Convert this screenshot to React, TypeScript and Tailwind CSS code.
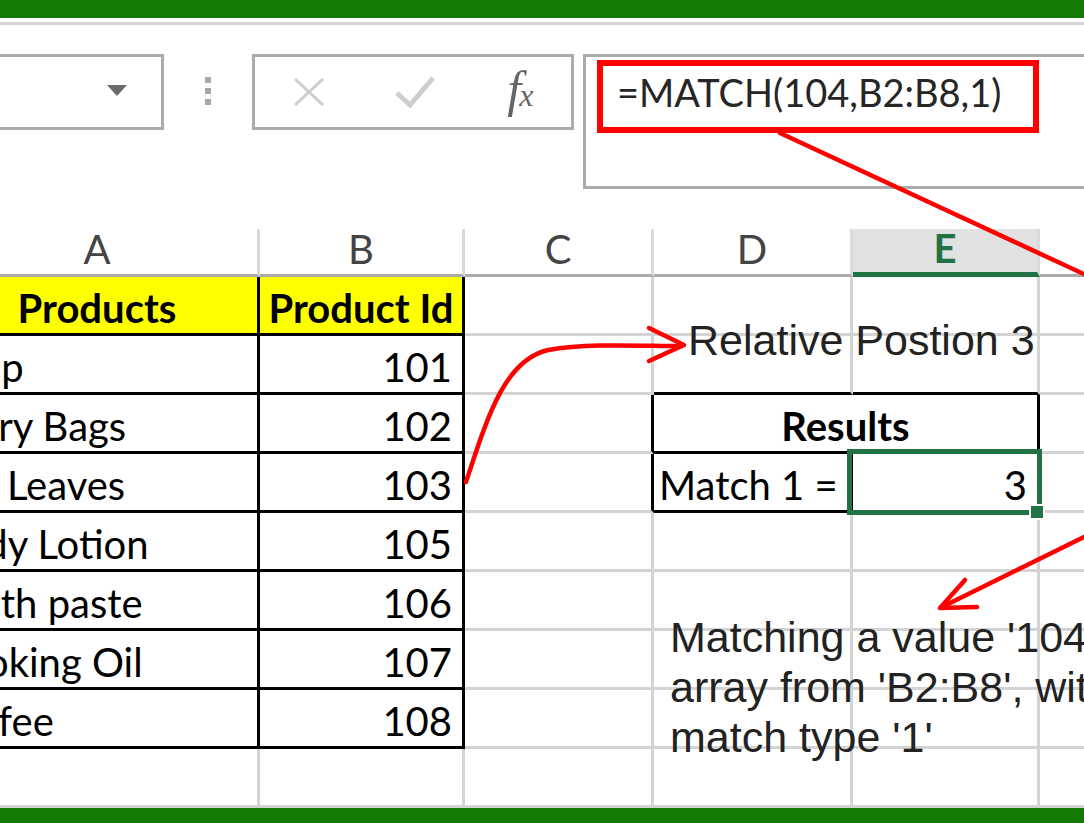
import React from 'react';

type Cell = {
  text?: string;
  align?: 'left' | 'center' | 'right';
  bold?: boolean;
  yellow?: boolean;
  right?: 'black' | 'grid';
  bottom?: 'black' | 'grid';
  span?: 2;
  shift?: boolean;
};

const rightBorder = { black: 'border-r-black', grid: 'border-r-[#d4d4d4]' };
const bottomBorder = { black: 'border-b-black', grid: 'border-b-[#d4d4d4]' };
const alignClass = {
  left: 'justify-start pl-[5px]',
  center: 'justify-center',
  right: 'justify-end pr-[10px]',
};

const products = [
  ['Soap', '101'],
  ['Carry Bags', '102'],
  ['Tea Leaves', '103'],
  ['Body Lotion', '105'],
  ['Tooth paste', '106'],
  ['Cooking Oil', '107'],
  ['Coffee', '108'],
];

// columns C..F for each product row
const sideCells = (i: number): Cell[] => {
  if (i === 0) return [{}, { bottom: 'black' }, { bottom: 'black' }, {}];
  if (i === 1)
    return [
      { right: 'black' },
      { text: 'Results', align: 'center', bold: true, span: 2, right: 'black', bottom: 'black' },
      {},
    ];
  if (i === 2)
    return [
      { right: 'black' },
      { text: 'Match 1 =', align: 'left', right: 'black', bottom: 'black' },
      { text: '3', align: 'right', right: 'black', bottom: 'black' },
      {},
    ];
  return [{}, {}, {}, {}];
};

const rows: Cell[][] = [
  [
    { text: 'Products', align: 'center', bold: true, yellow: true, right: 'black', bottom: 'black' },
    { text: 'Product Id', align: 'center', bold: true, yellow: true, right: 'black', bottom: 'black' },
    {},
    {},
    {},
    {},
  ],
  ...products.map(([name, id], i) => [
    { text: name, align: 'left', right: 'black', bottom: 'black', shift: true } as Cell,
    { text: id, align: 'right', right: 'black', bottom: 'black' } as Cell,
    ...sideCells(i),
  ]),
  [{}, {}, {}, {}, {}, {}],
];

const columns = ['A', 'B', 'C', 'D', 'E', 'F'];

function SheetCell({ cell }: { cell: Cell }) {
  return (
    <div
      className={`flex h-[59px] items-center whitespace-nowrap overflow-hidden border-r-[3px] border-b-[3px] pt-[5px] text-[40px] text-black ${
        rightBorder[cell.right ?? 'grid']
      } ${bottomBorder[cell.bottom ?? 'grid']} ${alignClass[cell.align ?? 'left']} ${
        cell.bold ? 'font-bold' : ''
      } ${cell.yellow ? 'bg-[#ffff00]' : ''} ${cell.span === 2 ? 'col-span-2' : ''}`}
    >
      <span className={cell.shift ? '-ml-[5px]' : ''}>{cell.text}</span>
    </div>
  );
}

export default function App() {
  return (
    <div className="relative h-[823px] w-[1084px] overflow-hidden bg-white font-['Lato',sans-serif]">
      <div className="h-[18px] bg-[#127c02]" />
      <div className="h-[4px]" />
      <div className="h-[3px] bg-[#d4d4d4]" />
      <div className="h-[29px]" />

      {/* formula bar */}
      <div className="flex h-[135px] items-start">
        <div className="-ml-[36px] flex h-[76px] w-[200px] shrink-0 items-center justify-end border-[3px] border-[#ababab] pr-[34px] pb-[4px]">
          <svg width="20" height="11" viewBox="0 0 20 11">
            <path d="M0 0 H20 L10 11 Z" fill="#6b6b6b" />
          </svg>
        </div>
        <div className="flex h-[76px] w-[88px] shrink-0 flex-col items-center justify-center gap-[5px] pb-[2px]">
          <div className="h-[6px] w-[6px] bg-[#a8a8a8]" />
          <div className="h-[6px] w-[6px] bg-[#a8a8a8]" />
          <div className="h-[6px] w-[6px] bg-[#a8a8a8]" />
        </div>
        <div className="grid h-[76px] w-[322px] shrink-0 grid-cols-3 items-center justify-items-center border-[3px] border-[#ababab]">
          <svg width="32" height="30" viewBox="0 0 32 30" className="ml-[2px]">
            <path d="M2 2 L30 28 M30 2 L2 28" stroke="#cdcdcd" strokeWidth="3" />
          </svg>
          <svg width="40" height="34" viewBox="0 0 40 34" className="ml-[4px]">
            <path d="M2 18 L15 30 L38 3" stroke="#cdcdcd" strokeWidth="5" fill="none" />
          </svg>
          <span className="ml-[4px] mb-[6px] font-['Liberation_Serif',serif] italic leading-none text-[#666666]">
            <span className="text-[50px]">f</span>
            <span className="-ml-[2px] text-[32px]">x</span>
          </span>
        </div>
        <div className="ml-[9px] h-[135px] w-[560px] shrink-0 border-[3px] border-[#ababab] pl-[11px] pt-[3px]">
          <div className="flex h-[73px] w-[442px] items-center border-[6px] border-[#ff0000] pl-[14px] pb-[8px] text-[38px] text-[#262626]">
            =MATCH(104,B2:B8,1)
          </div>
        </div>
      </div>

      <div className="h-[40px]" />

      {/* sheet */}
      <div className="-ml-[63px] grid w-[1223px] grid-cols-[323px_205px_189px_199px_187px_120px]">
        {columns.map((c) => (
          <div
            key={c}
            className={`flex h-[48px] items-center justify-center border-r-[3px] border-r-[#dadada] pb-[5px] text-[40px] ${
              c === 'E'
                ? 'border-b-[5px] border-b-[#217346] bg-[#e1e1e1] font-bold text-[#217346]'
                : 'border-b-[3px] border-b-[#ababab] text-[#444444]'
            }`}
          >
            {c}
          </div>
        ))}
        {rows.map((row, r) => row.map((cell, c) => <SheetCell key={`${r}-${c}`} cell={cell} />))}
      </div>

      <div className="h-[15px] bg-[#127c02]" />

      {/* active cell E4 */}
      <div className="absolute left-[847px] top-[449px] h-[66px] w-[195px] border-[5px] border-[#217346]" />
      <div className="absolute left-[1029px] top-[504px] h-[16px] w-[16px] border-2 border-white bg-[#217346]" />

      {/* text boxes */}
      <div className="absolute left-[688px] top-[319px] whitespace-nowrap font-['Liberation_Sans',Arial,sans-serif] text-[43px] leading-[43px] text-[#222222]">
        Relative Postion 3
      </div>
      <div className="absolute left-[670px] top-[612px] whitespace-nowrap font-['Liberation_Sans',Arial,sans-serif] text-[43px] leading-[50px] text-[#222222]">
        <div>Matching a value '104' in an</div>
        <div>array from 'B2:B8', with</div>
        <div>match type '1'</div>
      </div>

      {/* annotation arrows */}
      <svg
        className="pointer-events-none absolute left-0 top-0"
        width="1084"
        height="823"
        viewBox="0 0 1084 823"
        fill="none"
        stroke="#ff0000"
        strokeWidth="4.5"
        strokeLinecap="round"
        strokeLinejoin="round"
      >
        <path d="M466 482 C488 415 505 360 548 350 C590 343 640 346 682 346" />
        <path d="M649 328 L684 345 L649 361" />
        <path d="M780 133 L1200 328 L1200 480 L942 607" />
        <path d="M965 580 L940 608 L977 607" />
      </svg>
    </div>
  );
}
